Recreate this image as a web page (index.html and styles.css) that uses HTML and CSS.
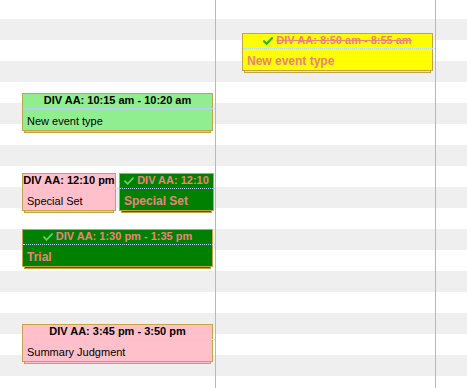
FILE: index.html
```html
<!DOCTYPE html>
<html>
<head>
<meta charset="utf-8">
<link rel="stylesheet" href="styles.css">
</head>
<body>
<div class="cal">
  <div class="col col-a">
    <div class="event ev-lightgreen ev-93">
      <div class="head">DIV AA: 10:15 am - 10:20 am</div>
      <div class="body">New event type</div>
    </div>
    <div class="event ev-pink ev-173 ev-half">
      <div class="head nowrap">DIV AA: 12:10 pm</div>
      <div class="body">Special Set</div>
    </div>
    <div class="event ev-green ev-173 ev-half2 done">
      <div class="head nowrap"><svg class="check" width="10" height="8" viewBox="0 0 10 8"><path d="M1 4.2 L3.6 6.8 L9 1.2"/></svg>DIV AA: 12:10</div>
      <div class="body">Special Set</div>
    </div>
    <div class="event ev-green ev-229 done">
      <div class="head"><svg class="check" width="10" height="8" viewBox="0 0 10 8"><path d="M1 4.2 L3.6 6.8 L9 1.2"/></svg>DIV AA: 1:30 pm - 1:35 pm</div>
      <div class="body">Trial</div>
    </div>
    <div class="event ev-pink ev-324">
      <div class="head">DIV AA: 3:45 pm - 3:50 pm</div>
      <div class="body">Summary Judgment</div>
    </div>
  </div>
  <div class="col col-b">
    <div class="event ev-yellow ev-33 done">
      <div class="head"><svg class="check" width="10" height="8" viewBox="0 0 10 8"><path d="M1 4.2 L3.6 6.8 L9 1.2"/></svg><span class="strike">DIV AA: 8:50 am - 8:55 am</span></div>
      <div class="body">New event type</div>
    </div>
  </div>
  <div class="col col-c"></div>
</div>
</body>
</html>
```

FILE: styles.css
```css
html, body {
  margin: 0;
  padding: 0;
}
body {
  font-family: "Liberation Sans", Arial, sans-serif;
  font-size: 11px;
  color: #000;
}
.cal {
  width: 467px;
  height: 388px;
  display: flex;
  overflow: hidden;
  background: repeating-linear-gradient(to bottom, #ffffff 0 21px, #efefef 21px 42px);
  background-position: 0 -2px;
}
.col {
  position: relative;
  height: 388px;
  border-right: 1px solid #a9bccf;
}
.col-a { width: 215px; }
.col-b { width: 219px; }
.col-c { flex: 1; border-right: none; }

.event {
  position: absolute;
  box-sizing: border-box;
  height: 38px;
  width: 191px;
  left: 22px;
  border: 1px solid #c4a445;
  background: var(--bg);
  box-shadow: 0 4px 0 -3px var(--bg), 0 4px 0 -2px #c4a445;
}
.col-b .event { left: 26px; }
.ev-33 { top: 33px; }
.ev-93 { top: 93px; }
.ev-173 { top: 173px; }
.ev-229 { top: 229px; }
.ev-324 { top: 324px; }
.ev-half { width: 94px; }
.ev-half2 { left: 119px; width: 95px; }

.ev-lightgreen { --bg: #90ee90; }
.ev-pink { --bg: #ffc0cb; }
.ev-green { --bg: #008000; }
.ev-yellow { --bg: #ffff00; }

.head {
  position: relative;
  height: 14px;
  line-height: 13px;
  text-align: center;
  font-weight: bold;
  font-size: 11px;
}
.head::after {
  content: "";
  position: absolute;
  left: 0;
  right: -3px;
  bottom: -1px;
  border-top: 1px dotted #b9d6f2;
}
.nowrap {
  white-space: nowrap;
}
.ev-half2 .head::after { right: -2px; }

.body {
  padding: 7px 4px 0 4px;
  line-height: 13px;
  font-size: 11px;
  white-space: nowrap;
  overflow: hidden;
}
.done .head,
.done .body {
  color: #f08080;
}
.done .body {
  font-weight: bold;
  font-size: 12px;
  padding-top: 7px;
}
.strike {
  text-decoration: line-through;
  text-decoration-color: #f08080;
}
.check {
  display: inline-block;
  vertical-align: -1px;
  margin-right: 3px;
}
.check path {
  fill: none;
  stroke: #2db52d;
  stroke-width: 2.2;
  stroke-linecap: square;
}
.ev-green .check path {
  stroke: #66cc66;
  stroke-width: 1.8;
}
```
